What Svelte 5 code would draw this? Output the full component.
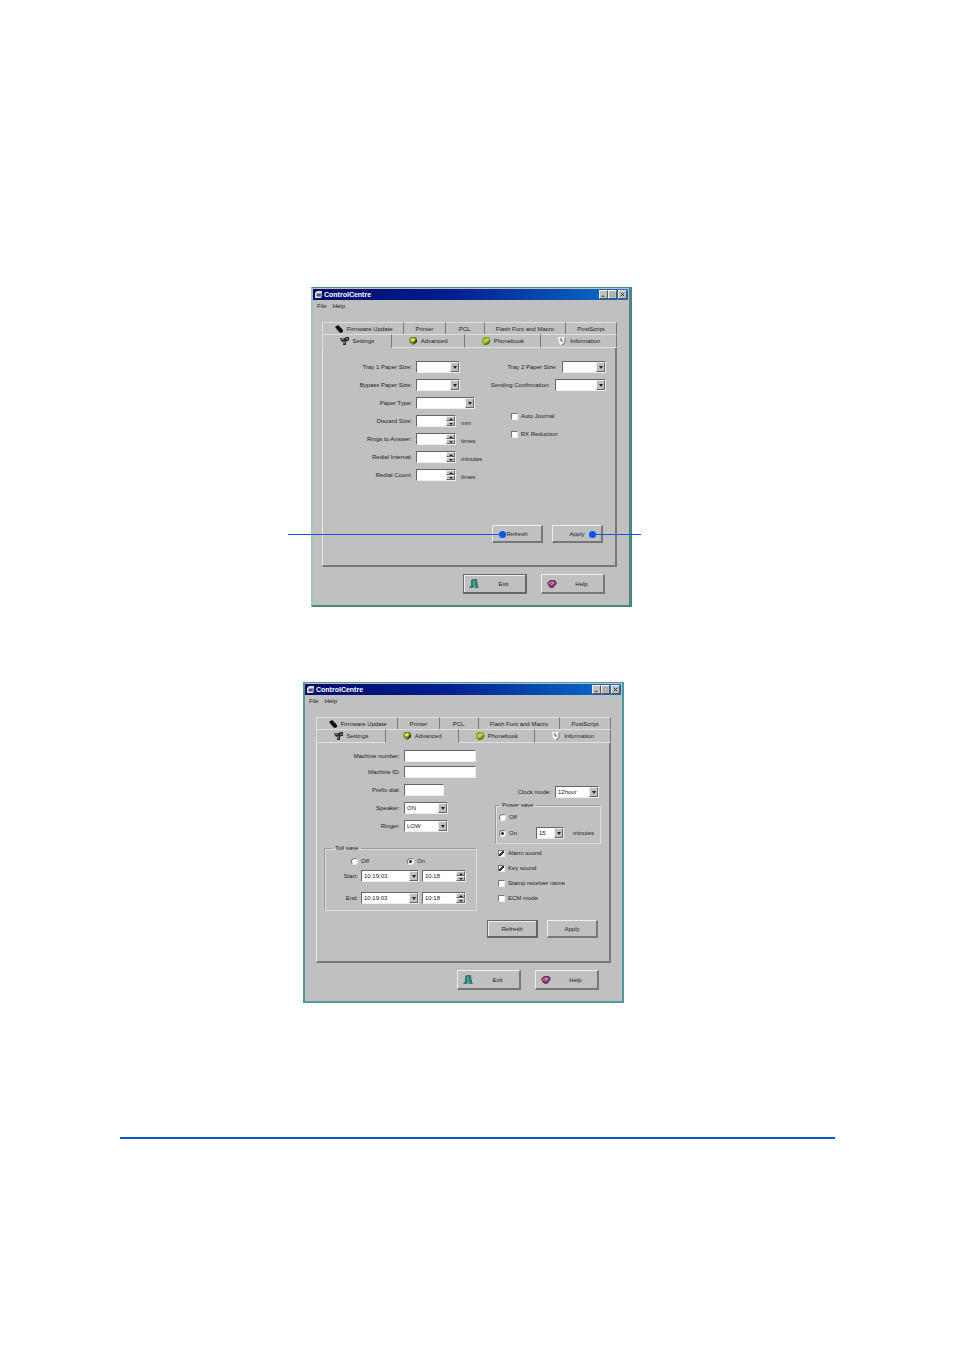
<script lang="ts">
  type Tab = { label: string; icon?: string; width: number };

  const backTabs: Tab[] = [
    { label: 'Firmware Update', icon: 'chip', width: 82 },
    { label: 'Printer', width: 41 },
    { label: 'PCL', width: 39 },
    { label: 'Flash Font and Macro', width: 82 },
    { label: 'PostScript', width: 51 },
  ];

  const frontTabs: Tab[] = [
    { label: 'Settings', icon: 'tools', width: 69 },
    { label: 'Advanced', icon: 'gear', width: 73 },
    { label: 'Phonebook', icon: 'book', width: 77 },
    { label: 'Information', icon: 'info', width: 76 },
  ];

  const paperFields = [
    { id: 'tray1', label: 'Tray 1 Paper Size:', size: 'medium' },
    { id: 'bypass', label: 'Bypass Paper Size:', size: 'medium' },
    { id: 'paper-type', label: 'Paper Type:', size: 'wide' },
  ];

  const countFields = [
    { id: 'discard', label: 'Discard Size:', unit: 'mm' },
    { id: 'rings', label: 'Rings to Answer:', unit: 'times' },
    { id: 'interval', label: 'Redial Interval:', unit: 'minutes' },
    { id: 'redials', label: 'Redial Count:', unit: 'times' },
  ];

  const tollRows = [
    { id: 'start', label: 'Start:', date: '10:19:03', time: '10:18' },
    { id: 'end', label: 'End:', date: '10:19:03', time: '10:18' },
  ];

  const options = [
    { label: 'Alarm sound', checked: true },
    { label: 'Key sound', checked: true },
    { label: 'Stamp receiver name', checked: false },
    { label: 'ECM mode', checked: false },
  ];
</script>

{#snippet icon(name: string)}
  <svg class="icon" viewBox="0 0 10 10" aria-hidden="true">
    {#if name === 'chip'}
      <path d="M1 3 4 1 9 6 9 8 7 9 5 8Z" fill="#111" />
      <path d="M2 5 3 4M4 7 5 6M6 2 5 3M8 4 7 5" stroke="#444" />
    {:else if name === 'tools'}
      <path d="M0 2h5l1-1h3v4H7L6 6v3H3V6L1 5Z" fill="#2a2a2a" />
      <path d="M1 3h3M6 3h2M4 5v3" fill="none" stroke="#aaa" />
    {:else if name === 'gear'}
      <path d="M1 3 3 1h5l1 2v3L5 9 2 7Z" fill="#6f8522" />
      <path d="M2 3 6 2 7 4 4 6Z" fill="#e6ea5c" />
      <path d="M5 9 9 6V3L6 7Z" fill="#2e3320" />
    {:else if name === 'book'}
      <path d="M1 3 3 1h5l1 2v3L7 9H3L1 7Z" fill="#86a81c" />
      <path d="M2 4 7 2 8 4 3 7Z" fill="#bcd648" />
      <path d="M3 9 8 7 9 4" fill="none" stroke="#4f6b16" />
    {:else if name === 'info'}
      <path d="M1 1h6l2 2v4L6 9H4L2 7Z" fill="#f4f4f4" />
      <path d="M4 2v3h2M8 2v5L5 9" fill="none" stroke="#555" />
    {:else if name === 'exit'}
      <path d="M2 1 4 0h4l1 7 1 2H6L5 8 3 9H0l2-3Z" fill="#2a7f70" />
      <path d="M4 2h1v5l2 1" fill="none" stroke="#75b5a9" />
    {:else if name === 'help'}
      <path d="M0 4 3 1h5l2 3-4 5-4-1Z" fill="#843467" />
      <path d="M2 5 5 3l2 1-3 2" fill="none" stroke="#dfb6cf" />
      <path d="M3 8h3l3-3" fill="none" stroke="#513050" />
    {/if}
  </svg>
{/snippet}

{#snippet combo(id: string, size: string, value = '')}
  <span class="field {size}">
    <select {id}><option>{value}</option></select>
    <span class="arrow" aria-hidden="true"></span>
  </span>
{/snippet}

{#snippet spinner(id: string, size: string, value = '', label = '')}
  <span class="field {size}">
    <input {id} type="text" {value} aria-label={label || undefined} />
    <span class="steps">
      <button type="button" class="step up" aria-label="Increase"></button>
      <button type="button" class="step down" aria-label="Decrease"></button>
    </span>
  </span>
{/snippet}

{#snippet tabRow(tabs: Tab[], active: string)}
  <div class="tabs" role="tablist">
    {#each tabs as tab (tab.label)}
      <button
        type="button"
        role="tab"
        class="tab"
        class:active={tab.label === active}
        aria-selected={tab.label === active}
        style:flex-grow={tab.width}
      >
        {#if tab.icon}{@render icon(tab.icon)}{/if}
        <span>{tab.label}</span>
      </button>
    {/each}
  </div>
{/snippet}

{#snippet actions(focused: boolean)}
  <div class="actions">
    <button type="button" class="push" class:focused>Refresh</button>
    <button type="button" class="push">Apply</button>
  </div>
{/snippet}

{#snippet settings()}
  <div class="settings">
    <div class="column">
      {#each paperFields as field (field.id)}
        <div class="row">
          <label for={field.id}>{field.label}</label>
          {@render combo(field.id, field.size)}
        </div>
      {/each}
      {#each countFields as field (field.id)}
        <div class="row">
          <label for={field.id}>{field.label}</label>
          {@render spinner(field.id, 'count')}
          <span class="unit">{field.unit}</span>
        </div>
      {/each}
    </div>
    <div class="column right">
      <div class="row">
        <label for="tray2">Tray 2 Paper Size:</label>
        {@render combo('tray2', 'medium')}
      </div>
      <div class="row">
        <label for="sending">Sending Confirmation:</label>
        {@render combo('sending', 'long')}
      </div>
      <div class="checks">
        <label class="choice"><input type="checkbox" />Auto Journal</label>
        <label class="choice"><input type="checkbox" />RX Reduction</label>
      </div>
    </div>
  </div>
{/snippet}

{#snippet advanced()}
  <div class="advanced">
    <div class="left">
      <div class="column">
        <div class="row">
          <label for="machine-number">Machine number:</label>
          <span class="field full"><input id="machine-number" type="text" /></span>
        </div>
        <div class="row">
          <label for="machine-id">Machine ID:</label>
          <span class="field full"><input id="machine-id" type="text" /></span>
        </div>
        <div class="row">
          <label for="prefix">Prefix dial:</label>
          <span class="field count"><input id="prefix" type="text" /></span>
        </div>
        <div class="row">
          <label for="speaker">Speaker:</label>
          {@render combo('speaker', 'medium', 'ON')}
        </div>
        <div class="row">
          <label for="ringer">Ringer:</label>
          {@render combo('ringer', 'medium', 'LOW')}
        </div>
      </div>
      <fieldset class="toll">
        <legend>Toll save</legend>
        <div class="radios">
          <label class="choice"><input type="radio" name="toll" />Off</label>
          <label class="choice"><input type="radio" name="toll" checked />On</label>
        </div>
        {#each tollRows as row (row.id)}
          <div class="toll-row">
            <label for={row.id}>{row.label}</label>
            {@render combo(row.id, 'date', row.date)}
            {@render spinner(`${row.id}-time`, 'time', row.time, `${row.label} time`)}
          </div>
        {/each}
      </fieldset>
    </div>
    <div class="side">
      <div class="clock">
        <label for="clock">Clock mode:</label>
        {@render combo('clock', 'medium', '12hour')}
      </div>
      <fieldset class="power">
        <legend>Power save</legend>
        <label class="choice"><input type="radio" name="power" />Off</label>
        <div class="power-on">
          <label class="choice"><input type="radio" name="power" checked />On</label>
          {@render combo('delay', 'short', '15')}
          <label for="delay">minutes</label>
        </div>
      </fieldset>
      <div class="options">
        {#each options as option (option.label)}
          <label class="choice"
            ><input type="checkbox" checked={option.checked} />{option.label}</label
          >
        {/each}
      </div>
    </div>
  </div>
{/snippet}

{#snippet dialog(active: string)}
  <section class="window" class:second={active === 'Advanced'} aria-label="ControlCentre">
    <header class="titlebar">
      <svg class="app-icon" viewBox="0 0 8 8" aria-hidden="true">
        <path d="M0 2 2 0h5v5L6 7H0Z" fill="#ddd" />
        <path d="M2 3h3v2H2ZM6 2v4" fill="#557" stroke="#557" />
      </svg>
      <h2>ControlCentre</h2>
      <div class="controls">
        <button type="button" aria-label="Minimize"
          ><svg viewBox="0 0 8 8"><path d="M2 6h3" /></svg></button
        >
        <button type="button" aria-label="Maximize" disabled
          ><svg viewBox="0 0 8 8"><path d="M2 2h4v4H2Z" /></svg></button
        >
        <button type="button" aria-label="Close"
          ><svg viewBox="0 0 8 8"><path d="m2 2 4 4m0-4L2 6" /></svg></button
        >
      </div>
    </header>
    <nav class="menu">
      <button type="button">File</button>
      <button type="button">Help</button>
    </nav>
    <div class="book">
      {@render tabRow(backTabs, active)}
      {@render tabRow(frontTabs, active)}
      <div class="panel" role="tabpanel">
        {#if active === 'Settings'}
          {@render settings()}
        {:else}
          {@render advanced()}
        {/if}
        {@render actions(active === 'Advanced')}
      </div>
    </div>
    <footer class="bottom">
      <button type="button" class="push large" class:focused={active === 'Settings'}>
        {@render icon('exit')}<span>Exit</span>
      </button>
      <button type="button" class="push large">
        {@render icon('help')}<span>Help</span>
      </button>
    </footer>
  </section>
{/snippet}

<main>
  <figure class="first">
    {@render dialog('Settings')}
    <span class="callout refresh"></span>
    <span class="callout apply"></span>
  </figure>
  <figure class="next">
    {@render dialog('Advanced')}
  </figure>
  <hr />
</main>

<style>
  :global(body) {
    margin: 0;
    background: #fff;
  }

  main {
    display: flex;
    flex-direction: column;
    align-items: center;
    padding: 287px 119px 212px 120px;
    font: 6px/8px 'Liberation Sans', Arial, sans-serif;
    color: #222;
  }

  main * {
    box-sizing: border-box;
  }

  button,
  input,
  select {
    font: inherit;
    color: inherit;
    margin: 0;
    padding: 0;
    border: 0;
    border-radius: 0;
    appearance: none;
    background: none;
  }

  figure {
    width: 100%;
    max-width: 321px;
    margin: 0;
  }

  .first {
    position: relative;
    margin-right: 12px;
  }

  .next {
    margin-top: 75px;
    margin-right: 28px;
  }

  hr {
    width: 100%;
    height: 2px;
    margin: 134px 0 0;
    border: 0;
    background: #0055dc;
  }

  .window {
    padding: 1px 1px 11px 0;
    border: solid #4a8583;
    border-width: 1px 3px 2px 2px;
    border-left-color: #a6c1bd;
    background: #c0c0c0;
  }

  .window.second {
    border-color: #50999a;
    border-right-width: 2px;
  }

  .titlebar {
    display: flex;
    align-items: center;
    height: 11px;
    padding: 0 1px 0 2px;
    background: linear-gradient(90deg, #020b6c, #001f90 45%, #0a71cc);
  }

  .app-icon {
    width: 8px;
    height: 8px;
  }

  h2 {
    flex: 1;
    margin: 0 0 0 1px;
    font: bold 7px/10px 'Liberation Sans', Arial, sans-serif;
    color: #fff;
  }

  .controls {
    display: flex;
  }

  .controls button {
    width: 9px;
    height: 9px;
    border: 1px solid;
    border-color: #eee #555 #555 #eee;
    background: #c0c0c0;
  }

  .controls button:last-child {
    margin-left: 1px;
  }

  .controls svg {
    display: block;
    width: 7px;
    height: 7px;
    fill: none;
    stroke: #222;
  }

  .controls button:disabled svg {
    stroke: #999;
  }

  .menu {
    display: flex;
    gap: 6px;
    height: 22px;
    padding: 0 4px;
  }

  .menu button {
    height: 11px;
  }

  .book {
    margin: 0 11px 0 9px;
  }

  .tabs {
    display: flex;
  }

  .tab {
    display: flex;
    flex: 1 1 0;
    justify-content: center;
    align-items: center;
    gap: 3px;
    height: 14px;
    border: solid;
    border-width: 1px 1px 1px 0;
    border-color: #e0e0e0 #777 #e0e0e0 #e0e0e0;
    white-space: nowrap;
  }

  .tab:first-child {
    border-left-width: 1px;
  }

  .tabs:first-child .tab {
    height: 12px;
    border-bottom: 0;
  }

  .tab.active {
    border-bottom-color: #c0c0c0;
  }

  .icon {
    flex: none;
    width: 10px;
    height: 10px;
  }

  .panel {
    display: flex;
    flex-direction: column;
    min-height: 219px;
    padding: 13px 9px 22px 7px;
    border: solid;
    border-width: 0 2px 2px 1px;
    border-color: #e8e8e8 #777 #777 #e8e8e8;
  }

  .settings,
  .advanced {
    display: flex;
    justify-content: space-between;
  }

  .column {
    display: flex;
    flex-direction: column;
    gap: 6px;
  }

  .row {
    display: flex;
    align-items: center;
    gap: 4px;
    height: 12px;
    white-space: nowrap;
  }

  .row > label {
    width: 82px;
    text-align: right;
  }

  .right .row {
    justify-content: flex-end;
    gap: 5px;
  }

  .right .row > label {
    width: auto;
  }

  .unit {
    padding: 3px 0 0 1px;
  }

  .checks {
    display: flex;
    flex-direction: column;
    gap: 10px;
    margin: 15px 0 0 20px;
  }

  .choice {
    display: flex;
    align-items: center;
    gap: 3px;
    height: 8px;
    white-space: nowrap;
  }

  .choice input {
    width: 7px;
    height: 7px;
    border: 1px solid;
    border-color: #777 #eee #eee #777;
    background: #fff;
  }

  .choice input[type='radio'] {
    border-radius: 50%;
  }

  .choice input[type='radio']:checked {
    background: radial-gradient(#333 1px, #fff 2px);
  }

  .choice input[type='checkbox']:checked {
    background: linear-gradient(135deg, #fff 40%, #333 40% 65%, #fff 65%);
  }

  .field {
    display: flex;
    flex: none;
    height: 12px;
    border: 1px solid;
    border-color: #666 #eee #eee #666;
    background: #fff;
  }

  .field input,
  .field select {
    flex: 1;
    width: 0;
    min-width: 0;
    height: 100%;
    padding-left: 2px;
  }

  .medium {
    width: 44px;
  }

  .wide {
    width: 59px;
  }

  .long {
    width: 51px;
  }

  .count {
    width: 40px;
  }

  .full {
    width: 72px;
  }

  .date {
    width: 58px;
  }

  .time {
    width: 44px;
  }

  .short {
    width: 28px;
  }

  .arrow,
  .step {
    border: 1px solid;
    border-color: #eee #666 #666 #eee;
    background: #c0c0c0;
  }

  .arrow {
    display: grid;
    place-items: center;
    width: 9px;
  }

  .arrow::before,
  .step::before {
    content: '';
    display: block;
    width: 0;
    border: solid transparent;
    border-width: 3px 2px 0;
    border-top-color: #222;
  }

  .steps {
    display: flex;
    flex-direction: column;
    width: 9px;
  }

  .step {
    display: grid;
    flex: 1;
    place-items: center;
  }

  .step::before {
    border-width: 2px 2px 0;
  }

  .step.up::before {
    border-width: 0 2px 2px;
    border-bottom-color: #222;
  }

  .actions {
    display: flex;
    justify-content: flex-end;
    gap: 9px;
    margin-top: auto;
    padding-right: 3px;
  }

  .push {
    width: 51px;
    height: 18px;
    border: solid;
    border-width: 1px 2px 2px 1px;
    border-color: #eee #777 #777 #eee;
    background: #c0c0c0;
    text-align: center;
  }

  .push.focused {
    border-color: #666;
    box-shadow: inset 1px 1px #eee;
  }

  .large {
    display: flex;
    align-items: center;
    width: 64px;
    height: 20px;
    padding: 0 5px;
  }

  .large span {
    flex: 1;
    padding-left: 8px;
  }

  .bottom {
    display: flex;
    justify-content: flex-end;
    gap: 14px;
    padding: 7px 23px 0 0;
  }

  .second .bottom {
    padding-right: 22px;
  }

  .second .book {
    margin: 0 10px 0 11px;
  }

  .second .panel {
    min-height: 220px;
    padding: 7px 8px 23px 7px;
  }

  .left .row > label {
    width: 76px;
  }

  .left .row:nth-child(2) {
    margin-top: -2px;
  }

  fieldset {
    min-width: 0;
    margin: 0;
    border: 1px solid #999;
    border-right-color: #ddd;
    border-bottom-color: #ddd;
    box-shadow: inset 1px 1px #ddd;
  }

  legend {
    padding: 0 3px;
  }

  .toll {
    width: 153px;
    margin-top: 12px;
    padding: 5px 7px 6px;
  }

  .radios {
    display: flex;
    gap: 38px;
    padding: 0 0 5px 19px;
  }

  .toll-row {
    display: flex;
    align-items: center;
    gap: 3px;
    margin-bottom: 10px;
  }

  .toll-row:last-child {
    margin-bottom: 0;
  }

  .toll-row > label {
    width: 26px;
    text-align: right;
  }

  .side {
    width: 106px;
    padding-top: 36px;
  }

  .clock {
    display: flex;
    justify-content: flex-end;
    align-items: center;
    gap: 4px;
    padding-right: 2px;
  }

  .power {
    margin-top: 3px;
    padding: 4px 3px;
  }

  .power-on {
    display: flex;
    align-items: center;
    margin-top: 6px;
  }

  .power-on .choice {
    width: 37px;
  }

  .power-on > label:last-child {
    padding-left: 9px;
  }

  .options {
    display: flex;
    flex-direction: column;
    gap: 7px;
    padding: 5px 3px;
  }

  /* Leader lines lie over the dialog and point at its buttons */
  .callout {
    position: absolute;
    top: 247px;
    height: 1px;
    background: #0055f5;
  }

  .callout::after {
    content: '';
    position: absolute;
    top: -3px;
    width: 7px;
    height: 7px;
    border-radius: 50%;
    background: #0055f5;
  }

  .refresh {
    left: -23px;
    right: 130px;
  }

  .refresh::after {
    right: -4px;
  }

  .apply {
    left: 282px;
    right: -9px;
  }

  .apply::after {
    left: -4px;
  }
</style>
